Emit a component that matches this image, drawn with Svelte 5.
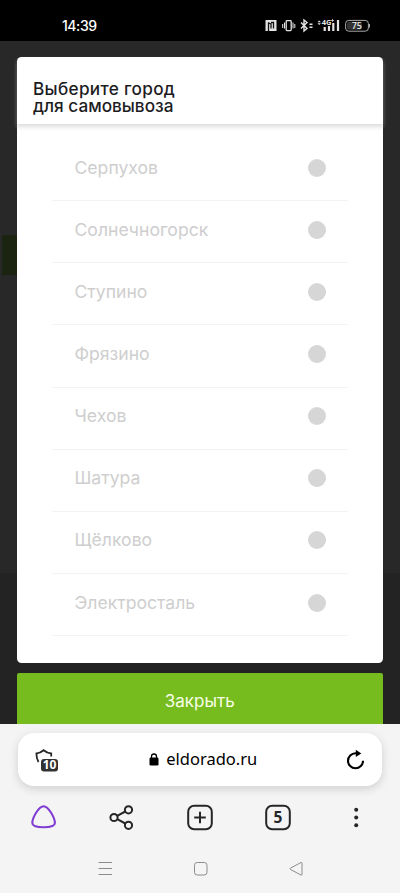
<script lang="ts">
    const cities : string[] = [
        "Серпухов",
        "Солнечногорск",
        "Ступино",
        "Фрязино",
        "Чехов",
        "Шатура",
        "Щёлково",
        "Электросталь"
    ];

    let selected : string = "";
</script>

<style>
    :global(body) {
        margin: 0;
        background-color: #f4f4f4;
    }

    #screen {
        width: 400px;
        height: 893px;
        display: flex;
        flex-direction: column;
        overflow: hidden;
        font-family: Inter, "Liberation Sans", sans-serif;
    }

    button {
        padding: 0;
        border: 0;
        background: none;
        font: inherit;
        color: inherit;
    }

    svg {
        display: block;
    }

    /* Status bar */
    #status {
        height: 41px;
        flex: none;
        box-sizing: border-box;
        padding: 11px 30px 0 62px;
        display: flex;
        align-items: center;
        justify-content: space-between;
        background-color: black;
        color: white;
    }

    #status time {
        font-size: 14px;
        font-weight: 500;
        line-height: 20px;
        letter-spacing: -0.45px;
    }

    /* Page behind the dialog */
    #site {
        height: 683px;
        flex: none;
        position: relative;
        overflow: hidden;
        background: linear-gradient(#282828 532px, #232323 532px);
    }

    #site-button {
        width: 30px;
        height: 40px;
        margin: 194px 0 0 2px;
        background-color: #1b2410;
    }

    #dialog {
        position: absolute;
        inset: 16px 17px 0 16.5px;
        display: flex;
        flex-direction: column;
        gap: 10.5px;
    }

    #panel {
        height: 605.5px;
        flex: none;
        border-radius: 4.5px;
        background-color: white;
    }

    #panel header {
        height: 67px;
        box-sizing: border-box;
        padding: 22.5px 16.5px 0;
        border-radius: 4.5px 4.5px 0 0;
        box-shadow: 0 3px 4px rgba(190, 190, 190, 0.5);
    }

    #panel h1 {
        margin: 0;
        font-size: 17.2px;
        font-weight: 500;
        line-height: 17.5px;
        color: #1d1d1f;
    }

    #panel h1 span {
        display: block;
    }

    #panel h1 span:first-child {
        letter-spacing: 0.3px;
    }

    #cities {
        margin: 0 35px 0 35.5px;
        padding: 15px 0 0;
        list-style: none;
    }

    #cities li {
        height: 62.15px;
        box-sizing: border-box;
        border-bottom: 1px solid #f3f3f3;
    }

    .city {
        width: 100%;
        height: 100%;
        padding: 0 22.5px 5px;
        display: flex;
        align-items: center;
        justify-content: space-between;
        font-size: 17.6px;
        font-weight: 400;
        color: #cecece;
    }

    .radio {
        width: 18px;
        height: 18px;
        margin-top: 1px;
        border-radius: 50%;
        background-color: #d6d6d6;
    }

    .radio.checked {
        background-color: #77bc1f;
    }

    #close {
        height: 51px;
        flex: none;
        padding-top: 4px;
        border-radius: 2px 2px 0 0;
        background-color: #77bc1f;
        color: #f7ffe9;
        font-size: 17px;
    }

    /* Browser controls */
    #browser {
        flex: 1;
        display: flex;
        flex-direction: column;
        background-color: #f4f4f4;
        color: #262628;
    }

    #address {
        height: 53px;
        box-sizing: border-box;
        margin: 9px 18px 0;
        padding: 0 16px 0 17px;
        display: flex;
        align-items: center;
        justify-content: space-between;
        border-radius: 16px;
        background-color: white;
        box-shadow: 0 3px 10px rgba(0, 0, 0, 0.15);
        color: black;
    }

    #host {
        display: flex;
        align-items: center;
        gap: 7.5px;
        font-family: "Noto Sans", sans-serif;
        font-size: 16.5px;
        line-height: 20px;
    }

    #host span {
        margin-top: -1px;
    }

    #toolbar {
        height: 28px;
        margin: 18px 30px 0 29px;
        display: flex;
        align-items: center;
        justify-content: space-between;
    }

    #system {
        height: 20px;
        margin: 27px 95px 0;
        display: flex;
        align-items: center;
        justify-content: space-between;
    }

    text {
        font-family: "Noto Sans", sans-serif;
        text-anchor: middle;
    }
</style>

<div id="screen">
    <div id="status">
        <time>14:39</time>
        <svg width="106" height="18" viewBox="264 17 106 18" fill="none" stroke="#e4e4e4">
            <!-- NFC -->
            <path d="M265.5 20h11v11h-11z" fill="#e4e4e4" stroke="none"/>
            <path d="M268.500 31v-8l2.500 1v4.500M271 22.500h2.500v6" stroke="#111" stroke-width="1.300"/>
            <!-- Vibration -->
            <rect x="286.200" y="20.600" width="5" height="10" rx="0.800" stroke-width="1.300"/>
            <path d="M284.500 22.500v6M293 22.500v6M282.700 24v4M294.800 24v4"/>
            <!-- Bluetooth -->
            <path d="M301 22.500l6 6-3 2.500v-11l3 2.500-6 6" stroke-width="1.400"/>
            <path d="M309.500 24.200h3M309.500 27.200h3" stroke-width="1.500"/>
            <!-- Mobile signal -->
            <path d="M317.500 22.200l1.700-1.700 1.700 1.700zM317.500 23.300l1.700 1.700 1.700-1.700z" fill="#e4e4e4" stroke="none"/>
            <text x="326.500" y="25" font-size="7.500" font-weight="700" fill="#e4e4e4" stroke="none">4G</text>
            <path d="M331 20.500h3M332.500 19v3" stroke-width="0.700"/>
            <path d="M324.700 27v4M329 26v5M333.300 23v8M338 20v11" stroke-width="2.200"/>
            <!-- Battery -->
            <rect x="345.600" y="20.400" width="22.800" height="10.800" rx="3.200" stroke="#aaa"/>
            <rect x="347" y="21.800" width="15" height="8" rx="2" fill="#333" stroke="none"/>
            <path d="M369.500 24v3.500" stroke="#aaa"/>
            <text x="356.800" y="29" font-size="9" font-weight="500" fill="#eee" stroke="none">75</text>
        </svg>
    </div>

    <div id="site">
        <div id="site-button"></div>

        <div id="dialog">
            <div id="panel">
                <header>
                    <h1><span>Выберите город</span> <span>для самовывоза</span></h1>
                </header>
                <ul id="cities">
                    {#each cities as city}
                        <li>
                            <button class="city" on:click={() => selected = city}>
                                <span>{city}</span>
                                <span class="radio" class:checked={selected === city}></span>
                            </button>
                        </li>
                    {/each}
                </ul>
            </div>
            <button id="close">Закрыть</button>
        </div>
    </div>

    <div id="browser">
        <div id="address">
            <svg width="25" height="26" viewBox="35 746.5 25 26" fill="none">
                <path d="M38.500 761.500c-1.500-2.600-2.100-5-2.100-8.500 2.700-.3 5.100-1.400 7.200-3.200 2.100 1.800 4.700 2.900 7.600 3.200v3" stroke="#262628" stroke-width="1.800"/>
                <rect x="41" y="758.400" width="17" height="12.500" rx="3" fill="#303032"/>
                <text x="49.500" y="768.900" font-size="12" font-weight="700" fill="white">10</text>
            </svg>
            <div id="host">
                <svg width="10" height="13" viewBox="0 0 10 13" fill="none">
                    <rect x="0.500" y="4.500" width="9" height="8" rx="1.300" fill="black"/>
                    <path d="M2.500 5.500v-2a2.500 2.500 0 0 1 5 0v2" stroke="black" stroke-width="1.300"/>
                </svg>
                <span>eldorado.ru</span>
            </div>
            <svg width="20" height="22" viewBox="346 748.5 20 22" fill="none">
                <path d="M356.500 752.800h-1a7.500 7.500 0 1 0 7.500 7.500" stroke="black" stroke-width="2.100"/>
                <path d="M355.800 749.300v7.200l5.500-3.600z" fill="black"/>
            </svg>
        </div>

        <div id="toolbar">
            <svg width="28" height="28" viewBox="29 804 28 28" fill="none">
                <path d="M43.600 806.200c5 0 11.300 11.800 11.300 16.900 0 3.300-5.500 4.200-11.300 4.200s-11.300-.9-11.300-4.200c0-5.100 6.300-16.900 11.300-16.900z" stroke="#813dd3" stroke-width="2.100"/>
            </svg>
            <svg width="28" height="28" viewBox="107 804 28 28" fill="none" stroke="#262628" stroke-width="2">
                <circle cx="114" cy="817.500" r="3.600"/>
                <circle cx="128.500" cy="809.800" r="3.600"/>
                <circle cx="128.500" cy="825.300" r="3.600"/>
                <path d="M117.200 815.800l8.100-4.300M117.200 819.200l8.100 4.300"/>
            </svg>
            <svg width="28" height="28" viewBox="186 804 28 28" fill="none" stroke="#262628" stroke-width="2">
                <rect x="188.200" y="805.700" width="23.600" height="23.600" rx="6"/>
                <path d="M194.200 817.500h11.600M200 811.700v11.600"/>
            </svg>
            <svg width="28" height="28" viewBox="264 804 28 28" fill="none">
                <rect x="266.200" y="805.700" width="23.600" height="23.600" rx="6" stroke="#262628" stroke-width="2"/>
                <text x="278" y="823" font-size="15.500" font-weight="700" fill="#262628">5</text>
            </svg>
            <svg width="28" height="28" viewBox="342 804 28 28" fill="#262628">
                <circle cx="356.200" cy="809.800" r="2"/>
                <circle cx="356.200" cy="817.500" r="2"/>
                <circle cx="356.200" cy="825.300" r="2"/>
            </svg>
        </div>

        <div id="system">
            <svg width="20" height="20" viewBox="95 859 20 20" stroke="#8c8c8c" stroke-width="1">
                <path d="M98.500 862.500h13.500M98.500 868.500h13.500M98.500 874.500h13.500"/>
            </svg>
            <svg width="20" height="20" viewBox="190 859 20 20" fill="none" stroke="#8c8c8c">
                <rect x="194.500" y="862.500" width="12.500" height="12.500" rx="2.800"/>
            </svg>
            <svg width="20" height="20" viewBox="285 859 20 20" fill="none" stroke="#8c8c8c">
                <path d="M301 862.500q1-.5 1 .8v10.900q0 1.300-1 .8l-10.500-5.500q-1.200-.7 0-1.400z"/>
            </svg>
        </div>
    </div>
</div>
